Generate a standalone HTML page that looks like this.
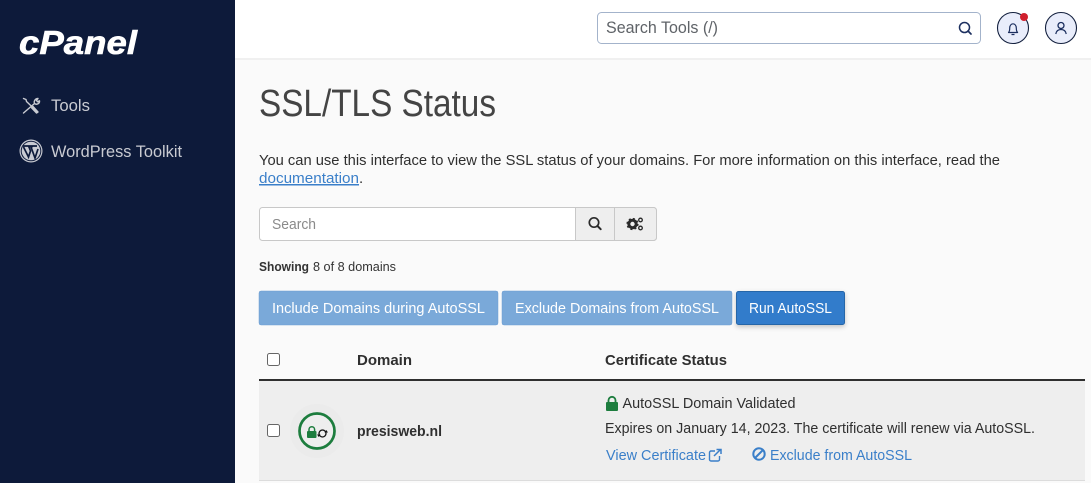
<!DOCTYPE html>
<html lang="en"><head><meta charset="utf-8"><title>SSL/TLS Status</title>
<style>
html,body{margin:0;padding:0;width:1091px;height:483px;overflow:hidden;background:#fafafa}
svg{display:block}
text{font-family:"Liberation Sans",sans-serif;white-space:pre}
.b{fill:#2f2f2f;font-size:15px}
.l{fill:#3a7fc9;font-size:15px}
.w{fill:#fff;font-size:15px}
.h{fill:#2f2f2f;font-size:15px;font-weight:bold}
.s{fill:#c9cbd2;font-size:16.5px}
</style></head><body>
<svg width="1091" height="483" viewBox="0 0 1091 483" xmlns="http://www.w3.org/2000/svg">
<defs>
<filter id="sh" x="-10%" y="-30%" width="120%" height="170%"><feDropShadow dx="0" dy="2" stdDeviation="2.5" flood-color="#000" flood-opacity=".22"/></filter>
</defs>
<rect width="1091" height="483" fill="#fafafa"/>
<!-- top bar -->
<rect x="235" width="856" height="58" fill="#fff"/>
<rect x="235" y="58" width="856" height="2" fill="#f0f0f0"/>
<!-- sidebar -->
<rect width="235" height="483" fill="#0d1a3a"/>
<text x="19" y="54" textLength="118" lengthAdjust="spacingAndGlyphs" font-size="33" font-weight="bold" font-style="italic" fill="#fff" stroke="#fff" stroke-width=".6">cPanel</text>
<g fill="none" stroke="#c9cbd2" stroke-width="1.4" stroke-linecap="round" stroke-linejoin="round">
<path d="M23.500 98.500l2.500 1 .5 2 11 10.500"/>
<path d="M33 106.500l5 5.500-1.500 1-5-5.200" fill="#c9cbd2"/>
<path d="M34.500 103.500l-11 9.500M34.500 103.500c-1-2.500 1-5 3.500-5l-1.500 2 1 1.300 2-1c.3 2.500-2.500 4.500-5 2.700"/>
</g>
<text x="51" y="111" class="s" textLength="39" lengthAdjust="spacingAndGlyphs">Tools</text>
<circle cx="31" cy="151" r="11.500" fill="#c9cbd2"/>
<circle cx="31" cy="151" r="10.300" fill="#0d1a3a"/>
<circle cx="31" cy="151" r="9.300" fill="#c9cbd2"/>
<path d="M23.500 147l5 10 2-6-1.500-4M28 146.500h5M31 147l4 11 3-9M23 146h8M31 146h6" fill="none" stroke="#0d1a3a" stroke-width="1.700"/>
<text x="51" y="157" class="s" textLength="131" lengthAdjust="spacingAndGlyphs">WordPress Toolkit</text>
<!-- top search -->
<rect x="597.500" y="12.500" width="383" height="31" rx="4" fill="#fff" stroke="#a3b3cb"/>
<text x="606" y="33" font-size="16.500" fill="#5f6368" textLength="112" lengthAdjust="spacingAndGlyphs">Search Tools (/)</text>
<circle cx="964.500" cy="27.500" r="5" fill="none" stroke="#1c2f5f" stroke-width="1.500"/>
<path d="M968 31l3 3" stroke="#1c2f5f" stroke-width="1.700" stroke-linecap="round"/>
<circle cx="1013" cy="28" r="15.500" fill="#e9edfb" stroke="#14213f" stroke-width="1.100"/>
<path d="M1008.500 32.500c1.300-1.300 1.200-2.500 1.200-4.500 0-2.200 1.300-4.200 3.300-4.200s3.300 2 3.300 4.200c0 2 0 3.200 1.300 4.500zM1011.500 34.500h3" fill="none" stroke="#1c2f5f" stroke-width="1.200" stroke-linejoin="round"/>
<circle cx="1024" cy="17" r="4" fill="#d0202e"/>
<circle cx="1061" cy="28" r="15.500" fill="#e9edfb" stroke="#14213f" stroke-width="1.100"/>
<circle cx="1061" cy="25.500" r="3" fill="none" stroke="#1c2f5f" stroke-width="1.300"/>
<path d="M1055.800 34c.5-3.200 2.500-4.500 5.200-4.500s4.700 1.300 5.200 4.500" fill="none" stroke="#1c2f5f" stroke-width="1.300"/>
<!-- heading -->
<text x="259" y="116" font-size="38" fill="#444" textLength="237" lengthAdjust="spacingAndGlyphs">SSL/TLS Status</text>
<text x="259" y="165" class="b" textLength="741" lengthAdjust="spacingAndGlyphs">You can use this interface to view the SSL status of your domains. For more information on this interface, read the</text>
<text x="259" y="183" class="l" textLength="100" lengthAdjust="spacingAndGlyphs" text-decoration="underline">documentation</text>
<text x="359" y="183" class="b">.</text>
<!-- search group -->
<rect x="259.500" y="207.500" width="397" height="33" rx="3" fill="#fff" stroke="#c8c8c8"/>
<path d="M575.500 207.500h78a3 3 0 0 1 3 3v27a3 3 0 0 1-3 3h-78z" fill="#eeeeee" stroke="#c8c8c8"/>
<path d="M614.500 208v32" stroke="#c8c8c8"/>
<text x="272" y="229" font-size="15" fill="#8a8a8a" textLength="44" lengthAdjust="spacingAndGlyphs">Search</text>
<circle cx="594" cy="222.500" r="4.700" fill="none" stroke="#2a2a2a" stroke-width="1.700"/>
<path d="M597.500 226l3.200 3.200" stroke="#2a2a2a" stroke-width="2" stroke-linecap="round"/>
<circle cx="632.500" cy="224" r="3.700" fill="none" stroke="#2a2a2a" stroke-width="3"/>
<circle cx="632.500" cy="224" r="5.300" fill="none" stroke="#2a2a2a" stroke-width="1.600" stroke-dasharray="2 2.200"/>
<circle cx="640.500" cy="220" r="1.800" fill="none" stroke="#2a2a2a" stroke-width="1.300"/>
<circle cx="640.500" cy="228" r="1.800" fill="none" stroke="#2a2a2a" stroke-width="1.300"/>
<text x="259" y="271" font-size="12.500" font-weight="bold" fill="#333" textLength="50" lengthAdjust="spacingAndGlyphs">Showing</text>
<text x="313" y="271" font-size="12.500" fill="#333" textLength="83" lengthAdjust="spacingAndGlyphs">8 of 8 domains</text>
<!-- buttons -->
<rect x="259" y="291" width="239" height="34" rx="2" fill="#7aa9d9" stroke="#6f9fd2" stroke-width=".5"/>
<text x="272" y="313" class="w" textLength="213" lengthAdjust="spacingAndGlyphs">Include Domains during AutoSSL</text>
<rect x="502" y="291" width="230" height="34" rx="2" fill="#7aa9d9" stroke="#6f9fd2" stroke-width=".5"/>
<text x="515" y="313" class="w" textLength="204" lengthAdjust="spacingAndGlyphs">Exclude Domains from AutoSSL</text>
<rect x="736.500" y="291.500" width="108" height="33" rx="2" fill="#337ccb" stroke="#2866a8" filter="url(#sh)"/>
<text x="749" y="313" class="w" textLength="83" lengthAdjust="spacingAndGlyphs">Run AutoSSL</text>
<!-- table -->
<rect x="267.500" y="353.500" width="12" height="12" rx="2" fill="#fff" stroke="#666"/>
<text x="357" y="365" class="h" textLength="55" lengthAdjust="spacingAndGlyphs">Domain</text>
<text x="605" y="365" class="h" textLength="122" lengthAdjust="spacingAndGlyphs">Certificate Status</text>
<rect x="259" y="379" width="826" height="2" fill="#2f2f2f"/>
<rect x="259" y="381" width="826" height="99" fill="#eeeeee"/>
<rect x="259" y="480" width="826" height="1" fill="#dcdcdc"/>
<rect x="267.500" y="424.500" width="12" height="12" rx="2" fill="#fff" stroke="#666"/>
<circle cx="317" cy="431" r="27" fill="#ebebeb"/>
<circle cx="317" cy="431" r="17.500" fill="#eeeeee" stroke="#1d7d3e" stroke-width="2.700"/>
<rect x="307" y="431" width="9.500" height="7" rx="1" fill="#1d7d3e"/>
<path d="M309 431.500v-2a2.800 2.800 0 0 1 5.600 0v2" fill="none" stroke="#1d7d3e" stroke-width="1.500"/>
<circle cx="322.500" cy="433.500" r="3.500" fill="none" stroke="#111" stroke-width="1.300"/>
<path d="M324.500 432.500h3.500l-1.700-2.500zM320.500 434.500h-3.500l1.700 2.500z" fill="#111"/>
<text x="357" y="436" class="h" textLength="85" lengthAdjust="spacingAndGlyphs">presisweb.nl</text>
<rect x="606" y="402" width="12" height="9" rx="1" fill="#1d7d3e"/>
<path d="M608.500 402.500v-2.200a3.500 3.500 0 0 1 7 0v2.200" fill="none" stroke="#1d7d3e" stroke-width="1.800"/>
<text x="622.500" y="408" class="b" textLength="173" lengthAdjust="spacingAndGlyphs">AutoSSL Domain Validated</text>
<text x="605" y="433" class="b" textLength="430" lengthAdjust="spacingAndGlyphs">Expires on January 14, 2023. The certificate will renew via AutoSSL.</text>
<text x="606" y="460" class="l" textLength="100" lengthAdjust="spacingAndGlyphs">View Certificate</text>
<path d="M715 451h-4a1.500 1.500 0 0 0-1.500 1.500v7a1.500 1.500 0 0 0 1.500 1.500h7a1.500 1.500 0 0 0 1.500-1.500v-3.500" fill="none" stroke="#3a7fc9" stroke-width="1.400"/>
<path d="M714 456l6.500-6.500M716.500 449.500h4.500v4.500" fill="none" stroke="#3a7fc9" stroke-width="1.500"/>
<circle cx="759" cy="454" r="5.700" fill="none" stroke="#3a7fc9" stroke-width="2"/>
<path d="M755 458l8-8" stroke="#3a7fc9" stroke-width="2"/>
<text x="770" y="460" class="l" textLength="142" lengthAdjust="spacingAndGlyphs">Exclude from AutoSSL</text>
</svg>
</body></html>
